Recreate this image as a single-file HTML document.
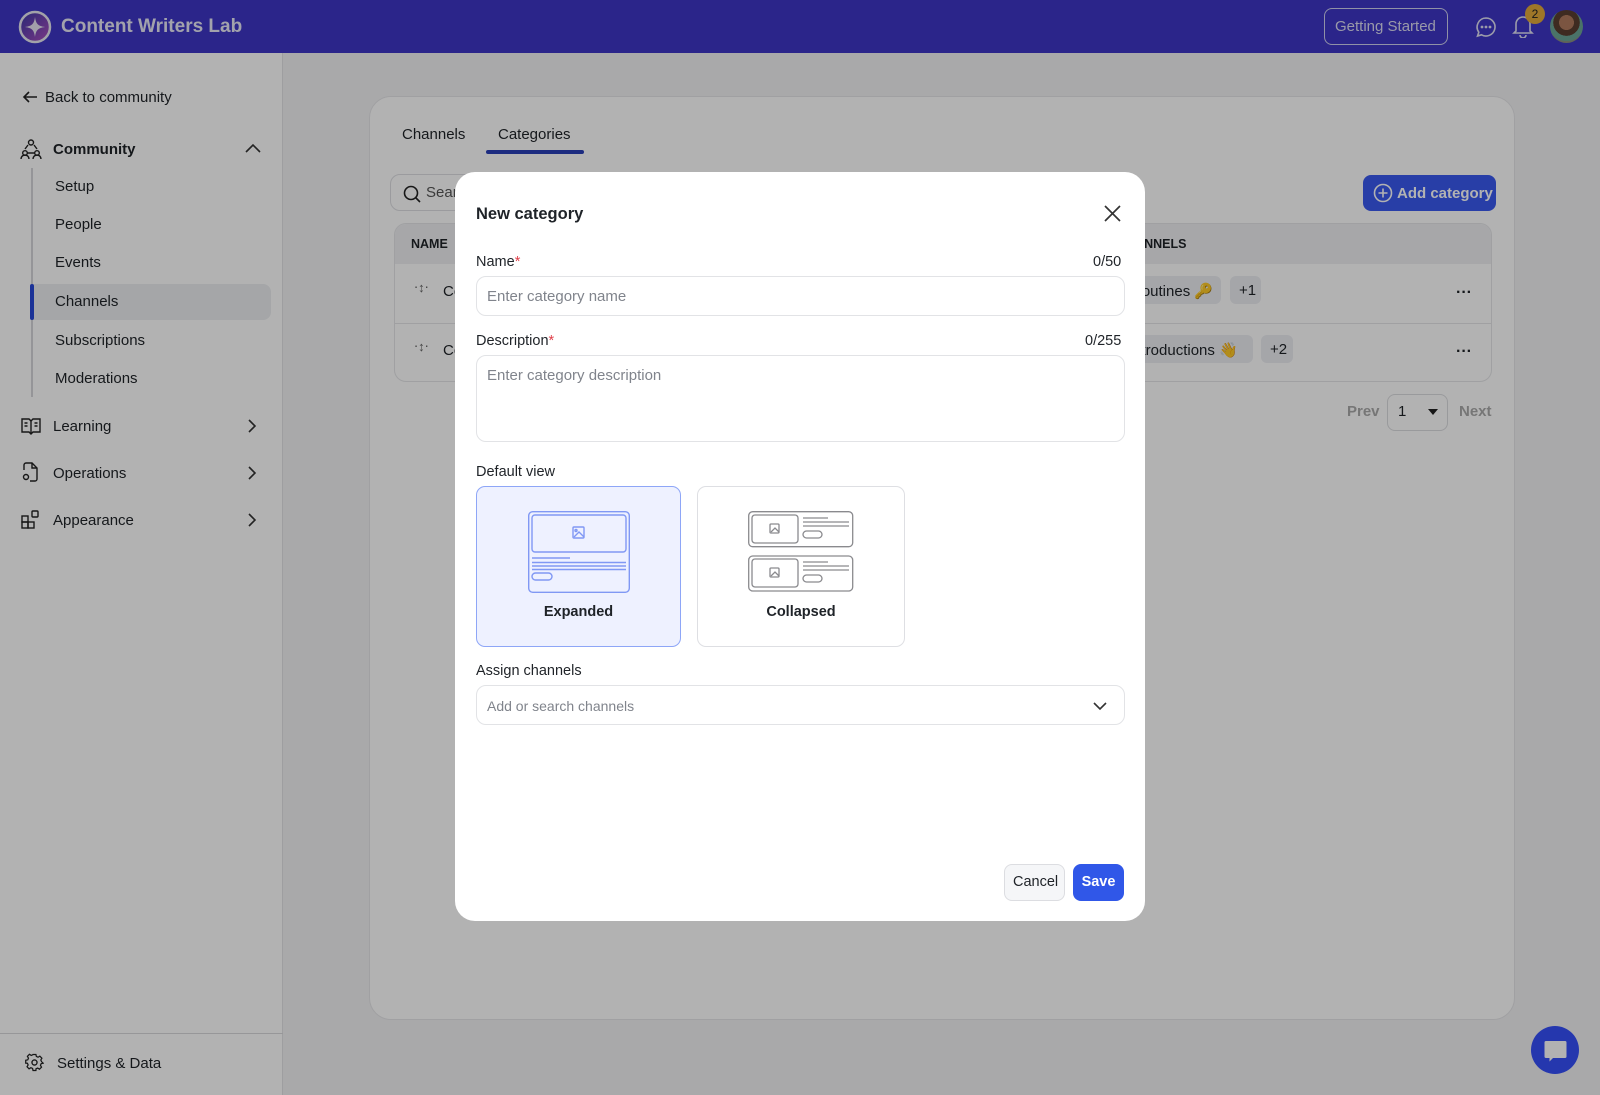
<!DOCTYPE html>
<html><head><meta charset="utf-8"><style>
*{box-sizing:border-box;margin:0;padding:0}
body{width:1600px;height:1095px;position:relative;overflow:hidden;font-family:"Liberation Sans",sans-serif;background:#f2f2f4;color:#1f2328}
.a{position:absolute}
.hdr{left:0;top:0;width:1600px;height:53px;background:#3e36c6}
.side{left:0;top:53px;width:283px;height:1042px;background:#fff;border-right:1px solid #e3e3e6}
.t{position:absolute;font-size:15px;white-space:nowrap}
.card{left:369px;top:96px;width:1146px;height:924px;background:#fff;border:1px solid #e6e6e9;border-radius:22px}
.ov{left:0;top:0;width:1600px;height:1095px;background:rgba(0,0,0,0.3)}
.modal{left:455px;top:172px;width:690px;height:749px;background:#fff;border-radius:20px}
.inp{position:absolute;border:1px solid #e2e3e6;border-radius:10px;background:#fff}
.ph{position:absolute;color:#80848c;font-size:15px}
</style></head><body>
<div class="a hdr">
 <svg class="a" style="left:18px;top:10px" width="34" height="34" viewBox="0 0 34 34"><defs><linearGradient id="g" x1="0" y1="0" x2="1" y2="1"><stop offset="0" stop-color="#3a3aa8"/><stop offset="1" stop-color="#b04fc0"/></linearGradient></defs><circle cx="17" cy="17" r="15" fill="url(#g)" stroke="#e8e8f2" stroke-width="2.5"/><path d="M17 7 C18 14 20 16 27 17 C20 18 18 20 17 27 C16 20 14 18 7 17 C14 16 16 14 17 7Z" fill="#e8e6f4"/></svg>
 <div class="t" style="left:61px;top:16px;font-size:19px;font-weight:bold;color:#e9e8f6">Content Writers Lab</div>
 <div class="a" style="left:1324px;top:8px;width:124px;height:37px;border:1.5px solid #cfd0f0;border-radius:8px"></div>
 <div class="t" style="left:1335px;top:18px;color:#dcdcf3">Getting Started</div>
 <svg class="a" style="left:1475px;top:16px" width="22" height="22" viewBox="0 0 22 22" fill="none" stroke="#e0e0f4" stroke-width="1.6"><path d="M11 2a9 9 0 1 1-4.5 16.8L2.5 20l1.3-3.8A9 9 0 0 1 11 2z"/><circle cx="7" cy="11" r=".6" fill="#e0e0f4"/><circle cx="11" cy="11" r=".6" fill="#e0e0f4"/><circle cx="15" cy="11" r=".6" fill="#e0e0f4"/></svg>
 <svg class="a" style="left:1512px;top:14px" width="22" height="24" viewBox="0 0 22 24" fill="none" stroke="#e0e0f4" stroke-width="1.6"><path d="M4 17V10a7 7 0 0 1 14 0v7l2 2H2z"/><path d="M8 21a3 3 0 0 0 6 0"/></svg>
 <div class="a" style="left:1525px;top:4px;width:20px;height:20px;border-radius:50%;background:#e2a93a;color:#222;font-size:12px;text-align:center;line-height:20px">2</div>
 <div class="a" style="left:1550px;top:10px;width:33px;height:33px;border-radius:50%;background:radial-gradient(circle at 50% 38%,#b07a5e 0 28%,#5a3e30 29% 50%,#6aa596 51% 70%,#8a8f80 71%)"></div>
</div>
<div class="a side">
 <svg class="a" style="left:22px;top:36px" width="16" height="16" viewBox="0 0 16 16" fill="none" stroke="#222" stroke-width="1.6"><path d="M15 8H2M7 3L2 8l5 5"/></svg>
 <div class="t" style="left:45px;top:36px">Back to community</div>
 <svg class="a" style="left:20px;top:85px" width="22" height="22" viewBox="0 0 22 22" fill="none" stroke="#222" stroke-width="1.4"><circle cx="11" cy="4.5" r="2.5"/><circle cx="5" cy="15" r="2.3"/><circle cx="17" cy="15" r="2.3"/><path d="M1 21c0-2.5 2-4 4-4s4 1.5 4 4M13 21c0-2.5 2-4 4-4s4 1.5 4 4M7 15h8M5 11l3-4M17 11l-3-4"/></svg>
 <div class="t" style="left:53px;top:88px;font-weight:bold">Community</div>
 <svg class="a" style="left:245px;top:90px" width="16" height="10" viewBox="0 0 16 10" fill="none" stroke="#333" stroke-width="1.6"><path d="M1 9l7-7 7 7"/></svg>
 <div class="a" style="left:31px;top:115px;width:2px;height:229px;background:#d6d6da"></div>
 <div class="a" style="left:31px;top:231px;width:240px;height:36px;background:#eceef1;border-radius:0 8px 8px 0"></div>
 <div class="a" style="left:30px;top:231px;width:4px;height:36px;background:#2848d8;border-radius:2px"></div>
 <div class="t" style="left:55px;top:125px">Setup</div>
 <div class="t" style="left:55px;top:163px">People</div>
 <div class="t" style="left:55px;top:201px">Events</div>
 <div class="t" style="left:55px;top:240px">Channels</div>
 <div class="t" style="left:55px;top:279px">Subscriptions</div>
 <div class="t" style="left:55px;top:317px">Moderations</div>
 <svg class="a" style="left:21px;top:364px" width="20" height="18" viewBox="0 0 20 18" fill="none" stroke="#222" stroke-width="1.4"><path d="M1 2h7l2 2 2-2h7v13h-7l-2 2-2-2H1z"/><path d="M10 4v13M3.5 6h3M3.5 9h3M13.5 6h3M13.5 9h3"/></svg>
 <div class="t" style="left:53px;top:365px">Learning</div>
 <svg class="a" style="left:248px;top:366px" width="9" height="14" viewBox="0 0 9 14" fill="none" stroke="#333" stroke-width="1.6"><path d="M1 1l6 6-6 6"/></svg>
 <svg class="a" style="left:21px;top:409px" width="18" height="20" viewBox="0 0 18 20" fill="none" stroke="#222" stroke-width="1.4"><path d="M3 8V3a2 2 0 0 1 2-2h6l5 5v11a2 2 0 0 1-2 2H9"/><path d="M11 1v5h5"/><circle cx="5" cy="15" r="2.5"/></svg>
 <div class="t" style="left:53px;top:412px">Operations</div>
 <svg class="a" style="left:248px;top:413px" width="9" height="14" viewBox="0 0 9 14" fill="none" stroke="#333" stroke-width="1.6"><path d="M1 1l6 6-6 6"/></svg>
 <svg class="a" style="left:21px;top:457px" width="19" height="19" viewBox="0 0 19 19" fill="none" stroke="#222" stroke-width="1.4"><rect x="1" y="6" width="6" height="6"/><rect x="1" y="12" width="6" height="6"/><rect x="7" y="12" width="6" height="6"/><rect x="11" y="1" width="6" height="6" rx="1"/></svg>
 <div class="t" style="left:53px;top:459px">Appearance</div>
 <svg class="a" style="left:248px;top:460px" width="9" height="14" viewBox="0 0 9 14" fill="none" stroke="#333" stroke-width="1.6"><path d="M1 1l6 6-6 6"/></svg>
 <div class="a" style="left:0;top:980px;width:283px;height:1px;background:#d9d9dc"></div>
 <svg class="a" style="left:25px;top:1000px" width="19" height="19" viewBox="0 0 24 24" fill="none" stroke="#222" stroke-width="1.7"><circle cx="12" cy="12" r="3.2"/><path d="M10 2h4l.6 2.8 2.3 1 2.5-1.5 2.8 2.8-1.5 2.5 1 2.3L24 14v0l-2.8.6-1 2.3 1.5 2.5-2.8 2.8-2.5-1.5-2.3 1L14 24h-4l-.6-2.8-2.3-1-2.5 1.5-2.8-2.8 1.5-2.5-1-2.3L0 14v-4l2.8-.6 1-2.3L2.3 4.6l2.8-2.8 2.5 1.5 2.3-1z" transform="scale(.92) translate(1 0)"/></svg>
 <div class="t" style="left:57px;top:1002px">Settings &amp; Data</div>
</div>
<div class="a card">
 <div class="t" style="left:32px;top:29px">Channels</div>
 <div class="t" style="left:128px;top:29px">Categories</div>
 <div class="a" style="left:116px;top:53px;width:98px;height:4px;background:#2a3fb8;border-radius:2px"></div>
 <div class="a" style="left:20px;top:77px;width:150px;height:37px;border:1px solid #dedfe3;border-radius:10px"></div>
 <svg class="a" style="left:33px;top:88px" width="18" height="18" viewBox="0 0 18 18" fill="none" stroke="#222" stroke-width="1.6"><circle cx="8" cy="8" r="6.5"/><path d="M13 13l4 4"/></svg>
 <div class="t" style="left:56px;top:87px;color:#555">Search</div>
 <div class="a" style="left:24px;top:126px;width:1098px;height:159px;border:1px solid #e5e6e9;border-radius:12px;overflow:hidden">
  <div class="a" style="left:0;top:0;width:1098px;height:40px;background:#eff0f3"></div>
  <div class="t" style="left:16px;top:13px;font-size:12.5px;font-weight:bold">NAME</div>
  <div class="t" style="left:722px;top:13px;font-size:12.5px;font-weight:bold">CHANNELS</div>
  <div class="a" style="left:0;top:99px;width:1098px;height:1px;background:#e5e6e9"></div>
  <div class="t" style="left:48px;top:59px;font-size:15px">Community</div>
  <div class="t" style="left:48px;top:118px;font-size:15px">Community</div>
  <div class="t" style="left:19px;top:56px;font-size:13px;color:#666">⋅↕⋅</div>
  <div class="t" style="left:19px;top:115px;font-size:13px;color:#666">⋅↕⋅</div>
  <div class="a" style="left:722px;top:52px;width:104px;height:28px;background:#eceef3;border-radius:6px"></div>
  <div class="t" style="left:736px;top:58px">Routines 🔑</div>
  <div class="a" style="left:835px;top:52px;width:31px;height:28px;background:#eceef3;border-radius:6px"></div>
  <div class="t" style="left:844px;top:58px">+1</div>
  <div class="a" style="left:722px;top:111px;width:136px;height:28px;background:#eceef3;border-radius:6px"></div>
  <div class="t" style="left:734px;top:117px">Introductions 👋</div>
  <div class="a" style="left:866px;top:111px;width:32px;height:28px;background:#eceef3;border-radius:6px"></div>
  <div class="t" style="left:875px;top:117px">+2</div>
  <div class="t" style="left:1061px;top:60px;font-weight:bold;font-size:16px">···</div>
  <div class="t" style="left:1061px;top:119px;font-weight:bold;font-size:16px">···</div>
 </div>
 <div class="a" style="left:993px;top:78px;width:133px;height:36px;background:#3a5af0;border-radius:8px"></div>
 <svg class="a" style="left:1003px;top:86px" width="20" height="20" viewBox="0 0 20 20" fill="none" stroke="#fff" stroke-width="1.6"><circle cx="10" cy="10" r="8.5"/><path d="M10 5.5v9M5.5 10h9"/></svg>
 <div class="t" style="left:1027px;top:88px;color:#fff;font-weight:bold">Add category</div>
 <div class="t" style="left:977px;top:306px;color:#aaa;font-weight:bold">Prev</div>
 <div class="a" style="left:1017px;top:297px;width:61px;height:37px;border:1px solid #dcdde0;border-radius:8px"></div>
 <div class="t" style="left:1028px;top:306px">1</div>
 <div class="a" style="left:1058px;top:312px;width:0;height:0;border-left:5px solid transparent;border-right:5px solid transparent;border-top:6px solid #222"></div>
 <div class="t" style="left:1089px;top:306px;color:#aaa;font-weight:bold">Next</div>
</div>
<div class="a" style="left:1531px;top:1026px;width:48px;height:48px;border-radius:50%;background:#3550fa"></div>
<svg class="a" style="left:1543px;top:1039px" width="25" height="25" viewBox="0 0 25 25"><path d="M3 2h19a1.5 1.5 0 0 1 1.5 1.5v14a1.5 1.5 0 0 1-1.5 1.5H10l-3.5 3.5V19H3a1.5 1.5 0 0 1-1.5-1.5v-14A1.5 1.5 0 0 1 3 2z" fill="#fff"/></svg>
<div class="a ov"></div>
<div class="a modal">
 <div class="t" style="left:21px;top:33px;font-size:16.5px;font-weight:bold">New category</div>
 <svg class="a" style="left:649px;top:33px" width="17" height="17" viewBox="0 0 17 17" stroke="#333" stroke-width="1.7"><path d="M1 1l15 15M16 1L1 16"/></svg>
 <div class="t" style="left:21px;top:82px;font-size:14.5px">Name<span style="color:#e0404a">*</span></div>
 <div class="t" style="left:638px;top:82px;font-size:14.5px">0/50</div>
 <div class="inp" style="left:21px;top:104px;width:649px;height:40px"></div>
 <div class="ph" style="left:32px;top:116px">Enter category name</div>
 <div class="t" style="left:21px;top:161px;font-size:14.5px">Description<span style="color:#e0404a">*</span></div>
 <div class="t" style="left:630px;top:161px;font-size:14.5px">0/255</div>
 <div class="inp" style="left:21px;top:183px;width:649px;height:87px"></div>
 <div class="ph" style="left:32px;top:195px">Enter category description</div>
 <div class="t" style="left:21px;top:292px;font-size:14.5px">Default view</div>
 <div class="a" style="left:21px;top:314px;width:205px;height:161px;background:#eef1ff;border:1.5px solid #8ea6f7;border-radius:9px"></div>
 <svg class="a" style="left:73px;top:339px" width="102" height="82" viewBox="0 0 102 82" fill="none" stroke="#8098f4" stroke-width="1.4"><rect x=".7" y=".7" width="100.6" height="80.6" rx="4"/><rect x="4" y="4" width="94" height="37" rx="3"/><rect x="45" y="16" width="11" height="11" rx="1"/><circle cx="48" cy="19.5" r="1"/><path d="M46 26l5-5 5 5"/><path d="M4 47h38M4 51.5h94M4 55h94M4 58.5h94"/><rect x="4" y="62" width="20" height="7" rx="3.5"/></svg>
 <div class="t" style="left:21px;top:432px;width:205px;text-align:center;font-size:14.5px;font-weight:bold">Expanded</div>
 <div class="a" style="left:242px;top:314px;width:208px;height:161px;background:#fff;border:1px solid #dedfe3;border-radius:9px"></div>
 <svg class="a" style="left:293px;top:339px" width="106" height="82" viewBox="0 0 106 82" fill="none" stroke="#8a8a8e" stroke-width="1.3"><rect x=".7" y=".7" width="104" height="35" rx="4"/><rect x="4" y="4" width="46" height="28" rx="3"/><rect x="22" y="13" width="9" height="9" rx="1"/><path d="M23 21l4-4 4 4"/><path d="M55 7h25M55 11h46M55 15h46"/><rect x="55" y="20" width="19" height="7" rx="3.5"/><rect x=".7" y="45" width="104" height="35" rx="4"/><rect x="4" y="48" width="46" height="28" rx="3"/><rect x="22" y="57" width="9" height="9" rx="1"/><path d="M23 65l4-4 4 4"/><path d="M55 51h25M55 55h46M55 59h46"/><rect x="55" y="64" width="19" height="7" rx="3.5"/></svg>
 <div class="t" style="left:242px;top:432px;width:208px;text-align:center;font-size:14.5px;font-weight:bold">Collapsed</div>
 <div class="t" style="left:21px;top:491px;font-size:14.5px">Assign channels</div>
 <div class="inp" style="left:21px;top:513px;width:649px;height:40px"></div>
 <div class="ph" style="left:32px;top:526px;font-size:14px">Add or search channels</div>
 <svg class="a" style="left:638px;top:530px" width="14" height="9" viewBox="0 0 14 9" fill="none" stroke="#333" stroke-width="1.6"><path d="M1 1l6 6 6-6"/></svg>
 <div class="a" style="left:549px;top:692px;width:61px;height:37px;background:#f5f6f8;border:1px solid #dcdde1;border-radius:8px"></div>
 <div class="t" style="left:558px;top:702px;font-size:14.5px">Cancel</div>
 <div class="a" style="left:618px;top:692px;width:51px;height:37px;background:#3057e8;border-radius:8px"></div>
 <div class="t" style="left:618px;top:702px;width:51px;text-align:center;font-size:14.5px;font-weight:bold;color:#fff">Save</div>
</div>
</body></html>
